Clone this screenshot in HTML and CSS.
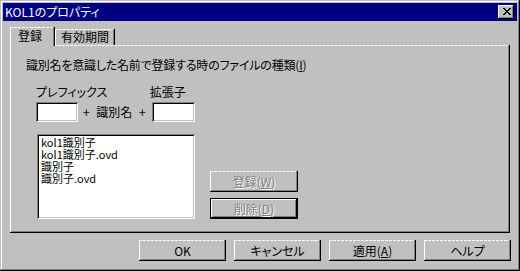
FILE: index.html
```html
<!DOCTYPE html>
<html lang="ja">
<head>
  <meta charset="UTF-8" />
  <title>KOL1のプロパティ</title>
  <link rel="stylesheet" href="styles.css">
</head>
<body>
  <div class="window">
    <div class="titlebar">
      <span class="title">KOL1のプロパティ</span>
      <span class="close">
        <svg width="8" height="7" viewBox="0 0 8 7"><path d="M0 0h2v1h1v1h2V1h1V0h2v1H7v1H6v1H5v1h1v1h1v1h1v1H6V6H5V5H3v1H2v1H0V6h1V5h1V4h1V3H2V2H1V1H0z" fill="#000"/></svg>
      </span>
    </div>

    <div class="content">
      <div class="tabs">
        <div class="tab active">登録</div>
        <div class="tab">有効期間</div>
      </div>

      <div class="panel">
        <p class="caption">識別名を意識した名前で登録する時のファイルの種類(<u>I</u>)</p>

        <div class="fields">
          <div class="field">
            <label>プレフィックス</label>
            <div class="textbox"></div>
          </div>
          <span class="joiner">+ 識別名 +</span>
          <div class="field ext">
            <label>拡張子</label>
            <div class="textbox"></div>
          </div>
        </div>

        <div class="list-row">
          <ul class="listbox">
            <li>kol1識別子</li>
            <li>kol1識別子.ovd</li>
            <li>識別子</li>
            <li>識別子.ovd</li>
          </ul>
          <div class="side-buttons">
            <button class="btn disabled">登録(<u>W</u>)</button>
            <button class="btn disabled default">削除(<u>D</u>)</button>
          </div>
        </div>
      </div>

      <div class="footer">
        <button class="btn">OK</button>
        <button class="btn">キャンセル</button>
        <button class="btn">適用(<u>A</u>)</button>
        <button class="btn">ヘルプ</button>
      </div>
    </div>
  </div>
</body>
</html>
```

FILE: styles.css
```css
body {
  margin: 0;
  font-family: "Noto Sans CJK JP", "Liberation Sans", sans-serif;
  font-size: 12px;
  font-feature-settings: "palt";
  color: #000;
  background: #c0c0c0;
}

.window {
  box-sizing: border-box;
  width: 520px;
  height: 271px;
  padding: 3px;
  background: #c0c0c0;
  box-shadow: inset -1px -1px #000, inset 1px 1px #c0c0c0,
              inset -2px -2px #808080, inset 2px 2px #fff;
}

.titlebar {
  height: 18px;
  background: #000080;
  color: #fff;
  display: flex;
  align-items: center;
  justify-content: space-between;
  padding: 0 3px 0 2px;
}

.title {
  line-height: 14px;
}

.close {
  box-sizing: border-box;
  width: 16px;
  height: 14px;
  background: #c0c0c0;
  box-shadow: inset -1px -1px #000, inset 1px 1px #fff, inset -2px -2px #808080;
  display: flex;
  align-items: center;
  justify-content: center;
  padding: 0 0 1px 1px;
}

.content {
  padding: 6px 6px 0 7px;
}

/* tabs */
.tabs {
  display: flex;
  align-items: flex-end;
  height: 18px;
}

.tab {
  box-sizing: border-box;
  height: 16px;
  padding: 1px 6px 0 6px;
  line-height: 14px;
  box-shadow: inset -1px 0 #000, inset 1px 0 #fff, inset -2px 0 #808080;
  background: linear-gradient(to right, #fff 3px, transparent 3px) top left / 4px 1px repeat-x;
}

.tab.active {
  position: relative;
  z-index: 1;
  height: 19px;
  width: 45px;
  margin-bottom: -1px;
  padding: 2px 8px 0;
  background-color: #c0c0c0;
}

/* panel */
.panel {
  box-sizing: border-box;
  width: 500px;
  height: 188px;
  padding: 12px 0 0 16px;
  box-shadow: inset -1px -1px #000, inset 1px 0 #fff, inset -2px -2px #808080;
  background: linear-gradient(to right, #fff 3px, transparent 3px) top left / 4px 1px repeat-x;
}

.caption {
  margin: 0;
  line-height: 15px;
  letter-spacing: -0.2px;
}

.fields {
  display: flex;
  align-items: flex-end;
  margin: 13px 0 0 10px;
}

.field {
  display: flex;
  flex-direction: column;
  width: 42px;
}

.field label {
  line-height: 14px;
  margin-bottom: 3px;
  white-space: nowrap;
}

.field.ext {
  width: 43px;
}

.field.ext label {
  margin-left: -2px;
}

.joiner {
  line-height: 20px;
  margin: 0 6px 0 5px;
  word-spacing: 4px;
  white-space: nowrap;
}

.textbox,
.listbox {
  box-sizing: border-box;
  background: #fff;
  box-shadow: inset 1px 1px #808080, inset -1px -1px #fff,
              inset 2px 2px #000, inset -2px -2px #c0c0c0;
}

.textbox {
  width: 100%;
  height: 20px;
}

.list-row {
  display: flex;
  margin: 12px 0 0 11px;
}

.listbox {
  width: 158px;
  height: 85px;
  margin: 0;
  padding: 2px 4px;
  list-style: none;
}

.listbox li {
  font-size: 11px;
  line-height: 12px;
}

.side-buttons {
  display: flex;
  flex-direction: column;
  gap: 6px;
  margin-left: 15px;
  padding-top: 37px;
}

/* buttons */
.btn {
  box-sizing: border-box;
  width: 88px;
  height: 21px;
  padding: 0;
  border: none;
  font: inherit;
  line-height: 19px;
  color: #000;
  background: linear-gradient(to right, #fff 3px, transparent 3px) top left / 4px 1px repeat-x, #c0c0c0;
  box-shadow: inset -1px -1px #000, inset 1px 0 #fff, inset -2px -2px #808080;
}

.btn.disabled {
  color: #808080;
  text-shadow: 1px 1px #fff;
}

.btn.default {
  box-shadow: inset 0 0 0 1px #000, inset -2px -2px #000, inset 2px 2px #fff, inset -3px -3px #808080;
}

.footer {
  display: flex;
  justify-content: flex-end;
  gap: 8px;
  margin-top: 7px;
}

.footer .btn {
  width: 87px;
}
```
